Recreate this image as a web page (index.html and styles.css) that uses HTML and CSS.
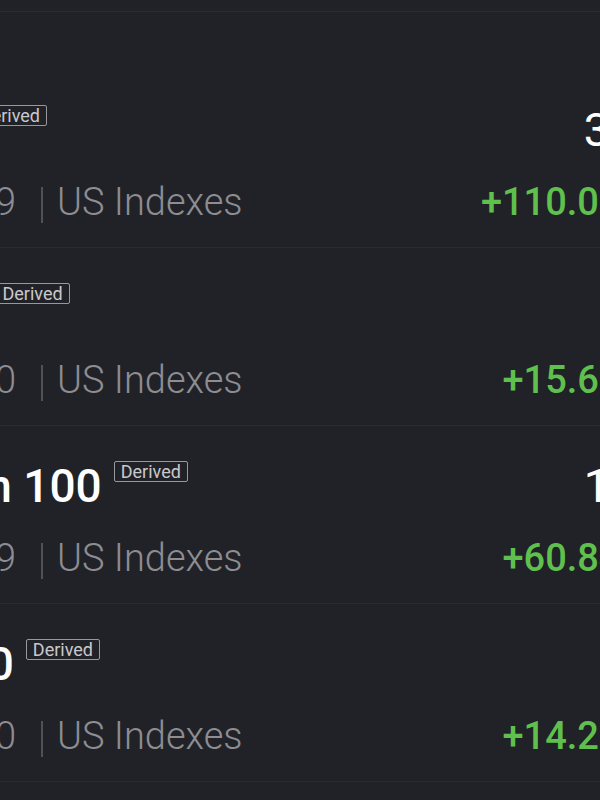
FILE: index.html
```html
<!DOCTYPE html>
<html lang="en">
<head>
<meta charset="utf-8">
<title>US Indexes</title>
<link rel="stylesheet" href="styles.css">
</head>
<body>
<div class="screen">
  <div class="topbar"></div>
  <div class="section-head"></div>
  <div class="list">
    <div class="row">
      <div class="left">
        <div class="title-line"><span class="title">USA Dow 30</span><span class="badge">Derived</span></div>
        <div class="sub-line"><span class="code">800009</span><span class="sep"></span><span class="market">US Indexes</span></div>
      </div>
      <div class="right">
        <div class="price">38,852.86</div>
        <div class="change"><span>+110.05</span><span class="pct">+0.28%</span></div>
      </div>
    </div>
    <div class="row">
      <div class="left">
        <div class="title-line"><span class="title">USA S&amp;P 500</span><span class="badge">Derived</span></div>
        <div class="sub-line"><span class="code">800010</span><span class="sep"></span><span class="market">US Indexes</span></div>
      </div>
      <div class="right">
        <div class="price">5,187.67</div>
        <div class="change"><span>+15.62</span><span class="pct">+0.30%</span></div>
      </div>
    </div>
    <div class="row">
      <div class="left">
        <div class="title-line"><span class="title">Golden Dragon 100</span><span class="badge">Derived</span></div>
        <div class="sub-line"><span class="code">800019</span><span class="sep"></span><span class="market">US Indexes</span></div>
      </div>
      <div class="right">
        <div class="price">18,120.35</div>
        <div class="change"><span>+60.84</span><span class="pct">+0.34%</span></div>
      </div>
    </div>
    <div class="row">
      <div class="left">
        <div class="title-line"><span class="title">Smallcap 2000</span><span class="badge">Derived</span></div>
        <div class="sub-line"><span class="code">800020</span><span class="sep"></span><span class="market">US Indexes</span></div>
      </div>
      <div class="right">
        <div class="price">2,059.78</div>
        <div class="change"><span>+14.21</span><span class="pct">+0.70%</span></div>
      </div>
    </div>
  </div>
</div>
</body>
</html>
```
FILE: styles.css
```css
html, body {
  margin: 0;
  padding: 0;
  background: #212227;
}
body {
  width: 600px;
  height: 800px;
  overflow: hidden;
  font-family: Roboto, "Liberation Sans", Arial, sans-serif;
}
.screen {
  width: 600px;
  overflow: hidden;
}
.topbar {
  height: 11px;
  border-bottom: 1px solid #2b2c31;
}
.section-head {
  height: 58px;
}
.list {
  margin-left: -293px;
  margin-right: -186px;
}
.row {
  box-sizing: border-box;
  height: 178px;
  padding-top: 32px;
  border-bottom: 1px solid #2a2b30;
  display: flex;
  justify-content: space-between;
  align-items: flex-start;
}
.left {
  display: flex;
  flex-direction: column;
}
.title-line {
  display: flex;
  align-items: flex-start;
  gap: 12px;
}
.title {
  font-size: 46px;
  line-height: 56px;
  font-weight: 500;
  color: #ffffff;
  white-space: nowrap;
}
.badge {
  margin-top: 3px;
  padding: 0 6px;
  font-size: 18px;
  line-height: 19px;
  color: #c9c9cc;
  border: 1.5px solid #98989c;
  border-radius: 2px;
  white-space: nowrap;
}
.sub-line {
  margin-top: 21px;
  display: flex;
  align-items: flex-start;
  font-size: 38px;
  line-height: 46px;
  font-weight: 300;
  color: #8d8d92;
}
.code {
  width: 309px;
  text-align: right;
}
.sep {
  width: 2px;
  height: 36px;
  margin: 8px 14px 0 25px;
  background: #505156;
}
.market {
  white-space: nowrap;
}
.right {
  display: flex;
  flex-direction: column;
  align-items: flex-end;
}
.price {
  font-size: 46px;
  line-height: 56px;
  font-weight: 400;
  color: #ffffff;
}
.change {
  margin-top: 21px;
  display: flex;
  gap: 41px;
  font-size: 38px;
  line-height: 46px;
  font-weight: 500;
  color: #5fc04d;
}
```
